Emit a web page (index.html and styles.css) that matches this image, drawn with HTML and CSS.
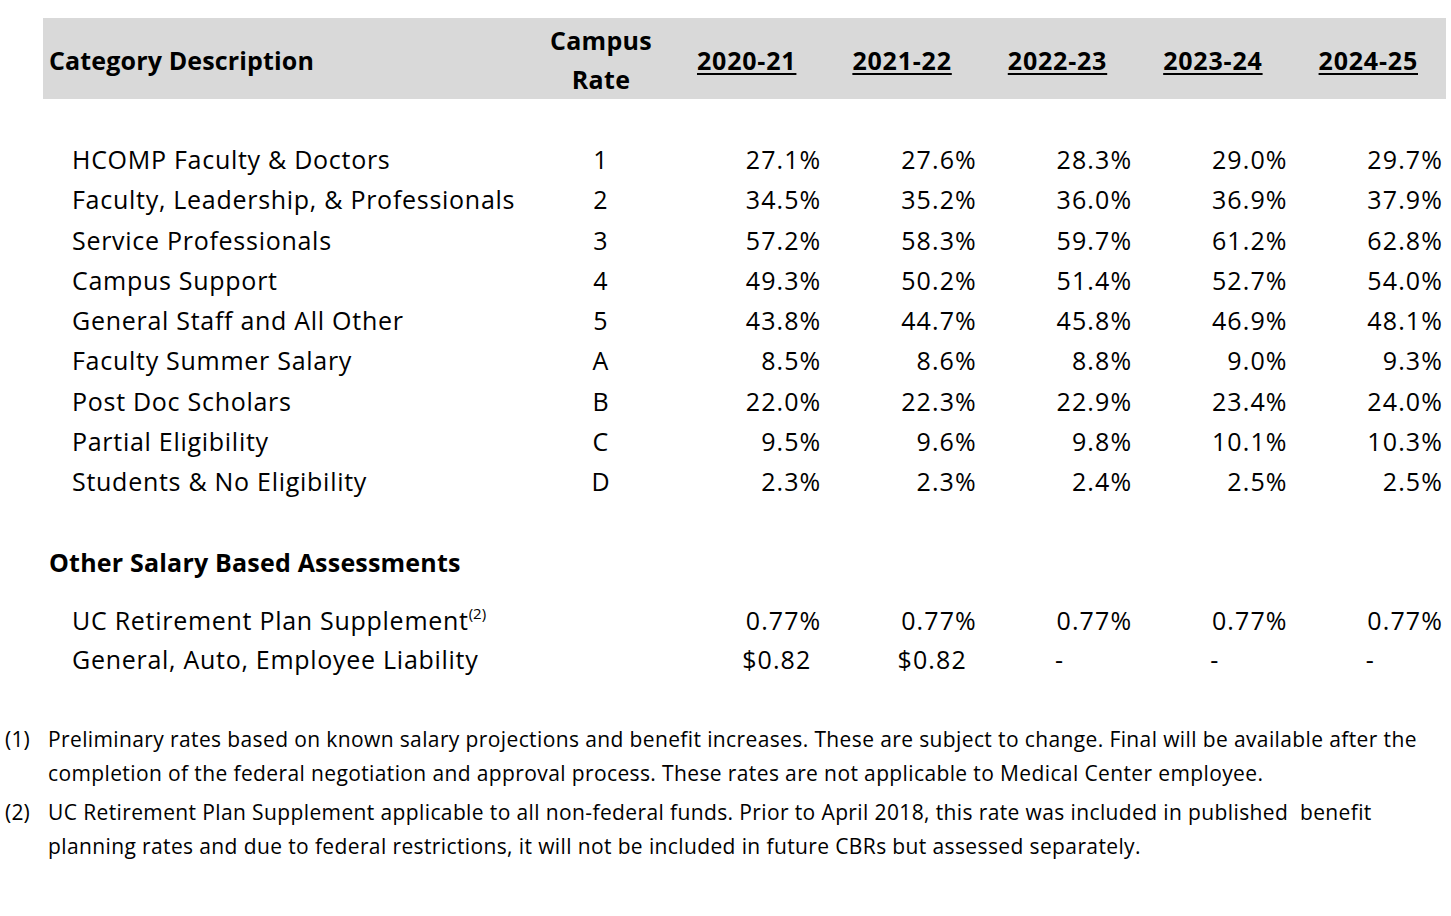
FILE: index.html
```html
<!DOCTYPE html>
<html>
<head>
<meta charset="utf-8">
<link rel="stylesheet" href="styles.css">
</head>
<body>
<div class="page">
  <div class="head">
    <div class="h-desc"><span class="lbl">Category Description</span></div>
    <div class="h-campus"><span class="lbl">Campus</span><span>Rate</span></div>
    <div class="h-year"><span class="u">2020-21</span></div>
    <div class="h-year"><span class="u">2021-22</span></div>
    <div class="h-year"><span class="u">2022-23</span></div>
    <div class="h-year"><span class="u">2023-24</span></div>
    <div class="h-year"><span class="u">2024-25</span></div>
  </div>

  <div class="rows">
    <div class="row"><div class="desc">HCOMP Faculty &amp; Doctors</div><div class="code">1</div><div class="v">27.1%</div><div class="v">27.6%</div><div class="v">28.3%</div><div class="v">29.0%</div><div class="v">29.7%</div></div>
    <div class="row"><div class="desc">Faculty, Leadership, &amp; Professionals</div><div class="code">2</div><div class="v">34.5%</div><div class="v">35.2%</div><div class="v">36.0%</div><div class="v">36.9%</div><div class="v">37.9%</div></div>
    <div class="row"><div class="desc">Service Professionals</div><div class="code">3</div><div class="v">57.2%</div><div class="v">58.3%</div><div class="v">59.7%</div><div class="v">61.2%</div><div class="v">62.8%</div></div>
    <div class="row"><div class="desc">Campus Support</div><div class="code">4</div><div class="v">49.3%</div><div class="v">50.2%</div><div class="v">51.4%</div><div class="v">52.7%</div><div class="v">54.0%</div></div>
    <div class="row"><div class="desc">General Staff and All Other</div><div class="code">5</div><div class="v">43.8%</div><div class="v">44.7%</div><div class="v">45.8%</div><div class="v">46.9%</div><div class="v">48.1%</div></div>
    <div class="row"><div class="desc">Faculty Summer Salary</div><div class="code">A</div><div class="v">8.5%</div><div class="v">8.6%</div><div class="v">8.8%</div><div class="v">9.0%</div><div class="v">9.3%</div></div>
    <div class="row"><div class="desc">Post Doc Scholars</div><div class="code">B</div><div class="v">22.0%</div><div class="v">22.3%</div><div class="v">22.9%</div><div class="v">23.4%</div><div class="v">24.0%</div></div>
    <div class="row"><div class="desc">Partial Eligibility</div><div class="code">C</div><div class="v">9.5%</div><div class="v">9.6%</div><div class="v">9.8%</div><div class="v">10.1%</div><div class="v">10.3%</div></div>
    <div class="row"><div class="desc">Students &amp; No Eligibility</div><div class="code">D</div><div class="v">2.3%</div><div class="v">2.3%</div><div class="v">2.4%</div><div class="v">2.5%</div><div class="v">2.5%</div></div>
  </div>

  <div class="section">Other Salary Based Assessments</div>

  <div class="rows other">
    <div class="row"><div class="desc">UC Retirement Plan Supplement<sup>(2)</sup></div><div class="code"></div><div class="v">0.77%</div><div class="v">0.77%</div><div class="v">0.77%</div><div class="v">0.77%</div><div class="v">0.77%</div></div>
    <div class="row"><div class="desc">General, Auto, Employee Liability</div><div class="code"></div><div class="v money">$0.82</div><div class="v money">$0.82</div><div class="v dash">-</div><div class="v dash">-</div><div class="v dash">-</div></div>
  </div>

  <div class="notes">
    <div class="note"><span class="num">(1)</span><p>Preliminary rates based on known salary projections and benefit increases. These are subject to change. Final will be available after the completion of the federal negotiation and approval process. These rates are not applicable to Medical Center employee.</p></div>
    <div class="note"><span class="num">(2)</span><p>UC Retirement Plan Supplement applicable to all non-federal funds. Prior to April 2018, this rate was included in published&nbsp; benefit planning rates and due to federal restrictions, it will not be included in future CBRs but assessed separately.</p></div>
  </div>
</div>
</body>
</html>
```

FILE: styles.css
```css
html, body {
  margin: 0;
  padding: 0;
  background: #ffffff;
}

body {
  font-family: "Open Sans", Lato, "Liberation Sans", sans-serif;
  color: #000000;
}

.page {
  width: 1451px;
  padding-top: 18px;
}

.head,
.row {
  display: grid;
  grid-template-columns: 490px 136px repeat(5, 1fr);
  margin-left: 43px;
  width: 1403px;
}

.head {
  background: #d9d9d9;
  height: 81px;
  font-weight: 700;
  font-size: 25px;
  letter-spacing: 0.15px;
  align-items: center;
}

.h-desc {
  padding-left: 6px;
  padding-top: 2px;
}

.h-campus {
  display: flex;
  flex-direction: column;
  align-items: center;
  line-height: 39px;
  padding-top: 2px;
  letter-spacing: 0.3px;
}

.h-year {
  text-align: center;
  padding-top: 2px;
  letter-spacing: 0.8px;
}

.u {
  text-decoration: underline;
  text-decoration-thickness: 2px;
  text-underline-offset: 3px;
}

.rows {
  margin-top: 40px;
  font-size: 25px;
}

.row {
  height: 40.25px;
  line-height: 40px;
  align-items: center;
}

.desc {
  padding-left: 29px;
  white-space: nowrap;
  letter-spacing: 0.72px;
}

.desc sup {
  font-size: 15px;
  line-height: 0;
  vertical-align: 11px;
  letter-spacing: 0;
}

.code {
  text-align: center;
  letter-spacing: 1.1px;
}

.v {
  text-align: right;
  padding-right: 3px;
  letter-spacing: 1.1px;
}

.v.money {
  padding-right: 13px;
}

.v.dash {
  text-align: center;
  padding-right: 0;
  padding-left: 4px;
}

.section {
  margin-top: 41px;
  margin-left: 49px;
  font-weight: 700;
  font-size: 25px;
  letter-spacing: 0.2px;
  line-height: 40px;
  height: 40px;
}

.rows.other {
  margin-top: 18px;
}

.other .row + .row {
  height: 37.5px;
  line-height: 37px;
}

.notes {
  margin-top: 45px;
  font-size: 21px;
  line-height: 33.5px;
  letter-spacing: 0.38px;
  display: flex;
  flex-direction: column;
  gap: 6px;
}

.note {
  display: flex;
}

.note .num {
  width: 48px;
  flex: none;
  padding-left: 5px;
  box-sizing: border-box;
  letter-spacing: 0.2px;
}

.note p {
  margin: 0;
  width: 1392px;
}
```
